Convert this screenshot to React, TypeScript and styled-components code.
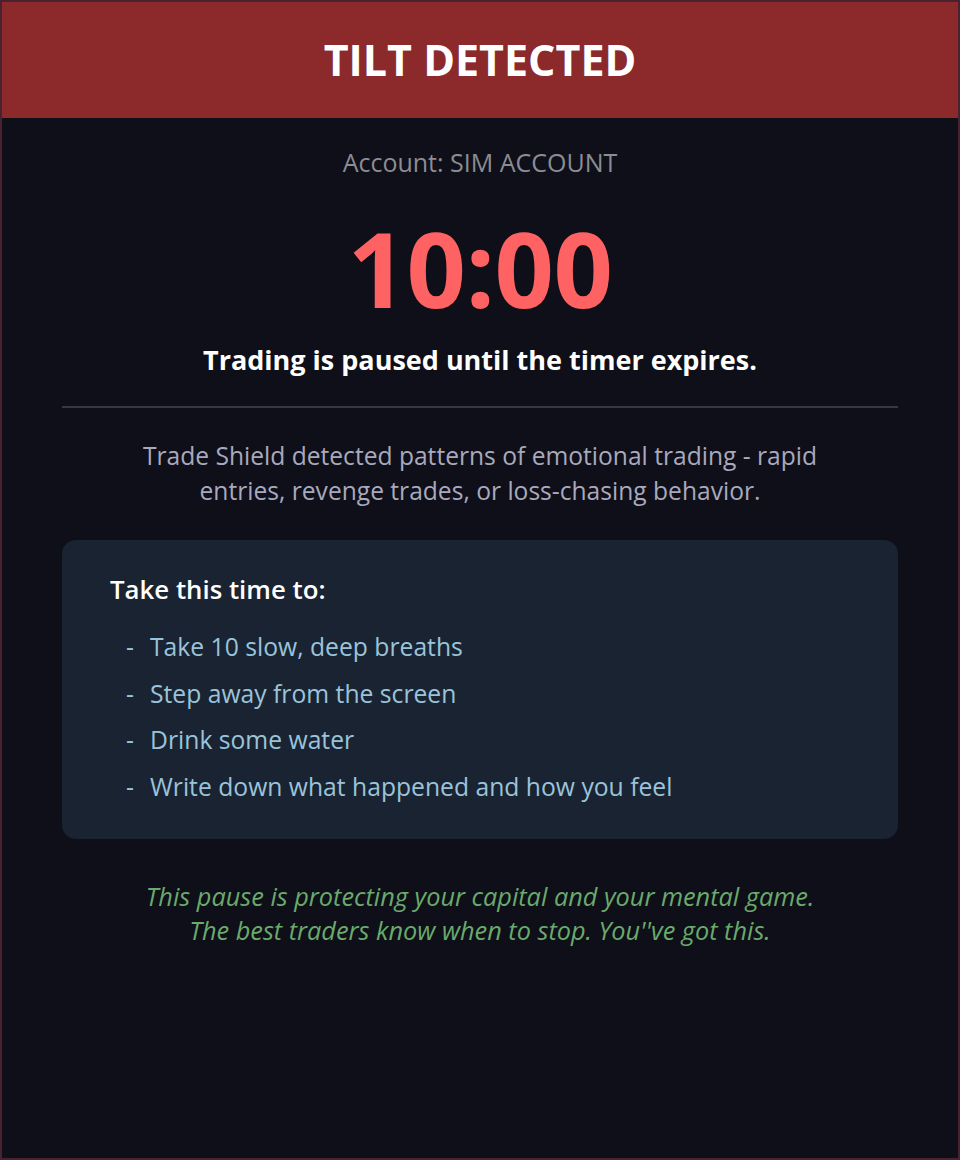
import * as React from 'react';
import styled, { createGlobalStyle } from 'styled-components';

const GlobalStyle = createGlobalStyle`
  html, body {
    margin: 0;
    padding: 0;
    background: #0e0f18;
  }
  body {
    font-family: "Open Sans", "Noto Sans", sans-serif;
  }
  * {
    box-sizing: border-box;
  }
`;

const steps = [
  'Take 10 slow, deep breaths',
  'Step away from the screen',
  'Drink some water',
  'Write down what happened and how you feel',
];

const App = () => (
  <>
    <GlobalStyle />
    <Frame>
      <Header>
        <Title>TILT DETECTED</Title>
      </Header>
      <Body>
        <Account>Account: SIM ACCOUNT</Account>
        <Timer>10:00</Timer>
        <Paused>Trading is paused until the timer expires.</Paused>
        <Divider />
        <Explain>
          Trade Shield detected patterns of emotional trading - rapid
          <br />
          entries, revenge trades, or loss-chasing behavior.
        </Explain>
        <Card>
          <CardTitle>Take this time to:</CardTitle>
          <List>
            {steps.map((s) => (
              <Item key={s}>
                <Dash>-</Dash>
                {s}
              </Item>
            ))}
          </List>
        </Card>
        <Encourage>
          This pause is protecting your capital and your mental game.
          <br />
          The best traders know when to stop. You''ve got this.
        </Encourage>
      </Body>
    </Frame>
  </>
);

export default App;

const Frame = styled.div`
  width: 960px;
  height: 1160px;
  border: 2px solid #4a2130;
  background: #0e0f18;
  display: flex;
  flex-direction: column;
  overflow: hidden;
`;

const Header = styled.header`
  height: 116px;
  background: #8b292b;
  display: flex;
  align-items: center;
  justify-content: center;
`;

const Title = styled.h1`
  margin: 0;
  color: #ffffff;
  font-size: 43px;
  font-weight: 700;
  line-height: 60px;
`;

const Body = styled.main`
  padding: 0 60px;
  display: flex;
  flex-direction: column;
  align-items: stretch;
  text-align: center;
`;

const Account = styled.div`
  margin-top: 29px;
  color: #8c8c94;
  font-size: 25px;
  line-height: 30px;
`;

const Timer = styled.div`
  margin-top: 26px;
  color: #ff6262;
  font-size: 104px;
  font-weight: 700;
  line-height: 130px;
  letter-spacing: -0.5px;
`;

const Paused = styled.div`
  margin-top: 10px;
  color: #ffffff;
  font-size: 27px;
  font-weight: 700;
  line-height: 34px;
`;

const Divider = styled.hr`
  margin: 29px 0 0;
  border: none;
  height: 2px;
  background: #363646;
`;

const Explain = styled.p`
  margin: 30px 0 0;
  color: #a9a9be;
  font-size: 24.6px;
  line-height: 35px;
`;

const Card = styled.section`
  margin-top: 32px;
  background: #1a2332;
  border-radius: 14px;
  padding: 30px 48px 29px;
  text-align: left;
`;

const CardTitle = styled.h2`
  margin: 0;
  color: #ffffff;
  font-size: 25.8px;
  font-weight: 600;
  line-height: 38px;
`;

const List = styled.ul`
  list-style: none;
  margin: 16px 0 0;
  padding: 0 0 0 16px;
`;

const Item = styled.li`
  color: #9ac3da;
  font-size: 24.7px;
  line-height: 46.6px;
`;

const Dash = styled.span`
  display: inline-block;
  width: 24px;
`;

const Encourage = styled.p`
  margin: 40px 0 0;
  color: #6aaa6c;
  font-size: 25.3px;
  font-style: italic;
  line-height: 34px;
`;
